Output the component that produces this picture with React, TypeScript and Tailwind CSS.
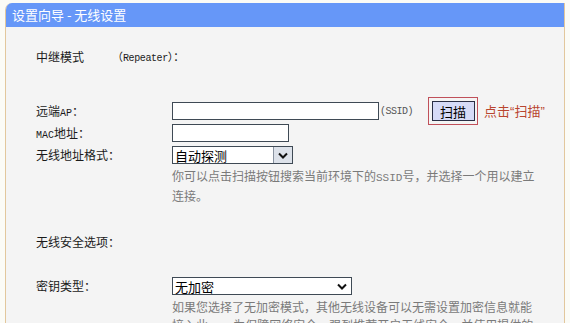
import React from "react";

const cjk = { fontFamily: '"Noto Sans CJK SC", "Noto Sans", sans-serif' };
const mono = { fontFamily: '"Liberation Mono", "DejaVu Sans Mono", monospace' };
const latin = { fontFamily: '"Liberation Sans", Arial, sans-serif' };

function Chevron() {
  return (
    <svg width="10" height="7" viewBox="0 0 10 7">
      <path d="M1 1.5 L5 5.5 L9 1.5" fill="none" stroke="#111" strokeWidth="2" />
    </svg>
  );
}

export default function App() {
  return (
    <div className="w-[570px] h-[323px] overflow-hidden bg-[#fbfbf6] pt-[3px] pl-[5px]" style={cjk}>
      <div className="w-[560px] h-[330px] rounded-tl-[7px] overflow-hidden border-l border-r border-[#e2c79c] bg-[#f4f4f4]">
        <div className="h-[24px] bg-[#6697f8] text-white text-[13px] leading-[24px] pl-[6px]">
          设置向导 - 无线设置
        </div>
        <div className="pl-[30px] text-[12px] text-[#1a1a1a]">
          <div className="mt-[22px] h-[16px] flex items-center">
            <span className="w-[76px]">中继模式</span>
            <span className="text-[11px]">（<span style={mono} className="text-[10px] tracking-[-0.4px]">Repeater</span>）：</span>
          </div>

          <div className="mt-[37px] h-[18px] flex items-center">
            <span className="w-[136px]">远端<span style={mono} className="text-[10px]">AP</span>：</span>
            <div className="w-[207px] h-[18px] bg-white border border-[#3f4a55]" />
            <span style={mono} className="text-[10px] tracking-[-0.5px] text-[#555] ml-[1px]">(SSID)</span>
            <div className="ml-[15px] w-[50px] h-[28px] border border-[#c0505a] flex items-center justify-center">
              <div className="w-[43px] h-[20px] bg-[#d6dbf7] border border-[#2a2f45] text-[13px] text-black flex items-center justify-center leading-none">
                扫描
              </div>
            </div>
            <span className="ml-[6px] text-[13px] text-[#b9452f]">
              点击<span style={latin}>“</span>扫描<span style={latin}>”</span>
            </span>
          </div>

          <div className="mt-[4px] h-[18px] flex items-center">
            <span className="w-[136px]"><span style={mono} className="text-[10px]">MAC</span>地址：</span>
            <div className="w-[117px] h-[18px] bg-white border border-[#3f4a55]" />
          </div>

          <div className="mt-[4px] h-[18px] flex items-center">
            <span className="w-[136px]">无线地址格式：</span>
            <div className="w-[121px] h-[18px] bg-white border border-[#3f4a55] flex items-center">
              <span className="flex-1 pl-[2px] text-[13px] text-black leading-none">自动探测</span>
              <div className="w-[19px] h-full bg-[#dde2ea] border-l border-[#8a93a0] flex items-center justify-center">
                <Chevron />
              </div>
            </div>
          </div>

          <div className="ml-[136px] mt-[3px] text-[#7a7a7a] leading-[18px] w-[380px]">
            你可以点击扫描按钮搜索当前环境下的<span style={mono} className="text-[11px]">SSID</span>号，并选择一个用以建立
            <br />
            连接。
          </div>

          <div className="mt-[29px] h-[16px] flex items-center">
            <span>无线安全选项：</span>
          </div>

          <div className="mt-[27px] h-[18px] flex items-center">
            <span className="w-[136px]">密钥类型：</span>
            <div className="w-[180px] h-[18px] bg-white border border-[#3f4a55] flex items-center">
              <span className="flex-1 pl-[2px] text-[13px] text-black leading-none">无加密</span>
              <div className="w-[19px] h-full flex items-center justify-center">
                <Chevron />
              </div>
            </div>
          </div>

          <div className="ml-[136px] mt-[3px] text-[#7a7a7a] leading-[18px] w-[380px]">
            如果您选择了无加密模式，其他无线设备可以无需设置加密信息就能
            <br />
            接入此<span style={mono} className="text-[11px]">AP</span>，为保障网络安全，强烈推荐开启无线安全，并使用提供的
          </div>
        </div>
      </div>
    </div>
  );
}
